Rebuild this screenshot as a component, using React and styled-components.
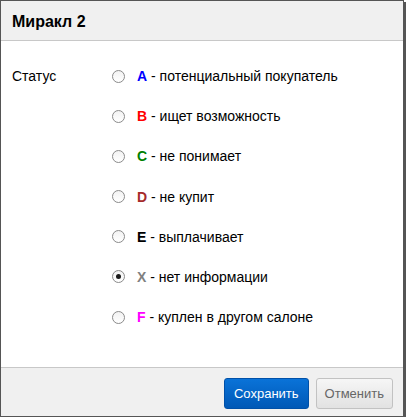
import React from "react";
import styled, { createGlobalStyle } from "styled-components";

const Global = createGlobalStyle`
  html, body { margin: 0; padding: 0; background: #fff; }
  body { font-family: "Liberation Sans", Arial, sans-serif; }
`;

const Dialog = styled.div`
  width: 404px;
  height: 417px;
  box-sizing: border-box;
  border: 1px solid #555;
  box-shadow: 2px 2px 0 #555;
  display: flex;
  flex-direction: column;
  background: #fff;
  font-family: "Liberation Sans", Arial, sans-serif;
`;

const Header = styled.div`
  height: 39px;
  background: #f0f0f0;
  border-bottom: 1px solid #c8c8c8;
  display: flex;
  align-items: center;
  padding: 0 11px;
  box-sizing: content-box;
`;

const Title = styled.h3`
  margin: 0;
  font-size: 16px;
  font-weight: bold;
  color: #000;
  padding-top: 2px;
`;

const Body = styled.div`
  flex: 1;
  display: grid;
  grid-template-columns: 100px 1fr;
  padding: 25px 11px 0;
`;

const Label = styled.div`
  font-size: 14px;
  color: #000;
  line-height: 20px;
`;

const Options = styled.div`
  display: flex;
  flex-direction: column;
  gap: 20.2px;
`;

const Option = styled.label`
  display: flex;
  align-items: center;
  height: 20px;
  font-size: 14px;
  color: #000;
  white-space: pre;
`;

const Radio = styled.span`
  width: 11px;
  height: 11px;
  border-radius: 50%;
  border: 1px solid #8a8a8a;
  background: linear-gradient(#f2f2f2, #ffffff);
  margin-right: 12px;
  display: flex;
  align-items: center;
  justify-content: center;
  flex-shrink: 0;
  &::after {
    content: "";
    width: 5px;
    height: 5px;
    border-radius: 50%;
    background: #1a1a1a;
    display: ${(p) => (p.$checked ? "block" : "none")};
  }
`;

const Code = styled.b`
  color: ${(p) => p.$color};
`;

const Footer = styled.div`
  height: 49px;
  background: #f0f0f0;
  border-top: 1px solid #c8c8c8;
  display: flex;
  justify-content: flex-end;
  align-items: flex-start;
  gap: 7px;
  padding: 10px 10px 0 0;
  box-sizing: border-box;
`;

const Button = styled.button`
  height: 31px;
  padding: 0 ${(p) => (p.$primary ? "9px" : "8px")};
  font-family: "Liberation Sans", Arial, sans-serif;
  font-size: 13px;
  border-radius: 3px;
  box-sizing: border-box;
  cursor: pointer;
  color: ${(p) => (p.$primary ? "#fff" : "#666")};
  border: 1px solid ${(p) => (p.$primary ? "#0050a8" : "#c2c2c2")};
  background: ${(p) =>
    p.$primary
      ? "linear-gradient(#0a73d8, #0058b6)"
      : "linear-gradient(#f6f6f6, #e2e2e2)"};
`;

const items = [
  { c: "A", color: "#0000ff", t: "потенциальный покупатель" },
  { c: "B", color: "#ff0000", t: "ищет возможность" },
  { c: "C", color: "#008000", t: "не понимает" },
  { c: "D", color: "#a52a2a", t: "не купит" },
  { c: "E", color: "#000000", t: "выплачивает" },
  { c: "X", color: "#808080", t: "нет информации", checked: true },
  { c: "F", color: "#ff00ff", t: "куплен в другом салоне" },
];

export default function App() {
  return (
    <>
      <Global />
      <Dialog>
        <Header>
          <Title>Миракл 2</Title>
        </Header>
        <Body>
          <Label>Статус</Label>
          <Options>
            {items.map((it) => (
              <Option key={it.c}>
                <Radio $checked={it.checked} />
                <Code $color={it.color}>{it.c}</Code>
                {" - " + it.t}
              </Option>
            ))}
          </Options>
        </Body>
        <Footer>
          <Button $primary>Сохранить</Button>
          <Button>Отменить</Button>
        </Footer>
      </Dialog>
    </>
  );
}
